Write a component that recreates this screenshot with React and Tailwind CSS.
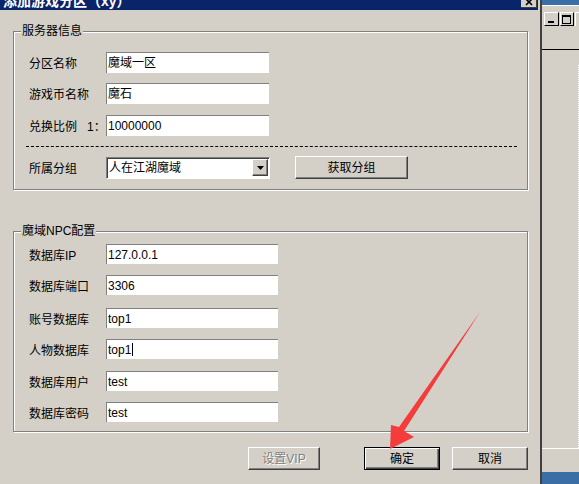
import React from "react";

const font = { fontFamily: '"Liberation Sans", "Noto Sans CJK SC", sans-serif' };

const GroupBox = ({ title, className, children }) => (
  <div
    className={`relative w-[515px] border border-[#808080] shadow-[inset_1px_1px_0_#fff,1px_1px_0_#fff] ${className}`}
  >
    <span className="absolute -top-[8px] left-[7px] bg-[#d4d0c8] px-[1px] text-[12px] leading-[14px] text-black">
      {title}
    </span>
    {children}
  </div>
);

const TextBox = ({ value, w, h = 20, caret }) => (
  <div
    className={`flex items-center bg-white border-t border-l border-[#808080] pl-[1px] text-[12px] leading-none text-black ${w} ${h === 21 ? "h-[21px]" : "h-[20px]"}`}
  >
    {value}
    {caret && <span className="ml-[1px] h-[13px] w-px bg-black" />}
  </div>
);

const Row = ({ label, children, className = "" }) => (
  <div className={`flex items-center pl-[15px] ${className}`}>
    <span className="flex w-[77px] pt-[3px] text-[12px] leading-none text-black">{label}</span>
    {children}
  </div>
);

const Btn = ({ children, w, primary, disabled }) => (
  <button
    className={`h-[23px] ${w} flex items-center justify-center text-[12px] bg-[#d4d0c8] ${
      primary
        ? "border border-black shadow-[inset_1px_1px_0_#fff,inset_-1px_-1px_0_#404040,inset_-2px_-2px_0_#808080]"
        : "border border-t-white border-l-white border-r-[#404040] border-b-[#404040] shadow-[inset_-1px_-1px_0_#808080]"
    } ${disabled ? "text-[#808080] [text-shadow:1px_1px_0_#fff]" : "text-black"}`}
  >
    {children}
  </button>
);

const npcRows = [
  { label: "数据库IP", value: "127.0.0.1", mt: "mt-0" },
  { label: "数据库端口", value: "3306", mt: "mt-[11px]" },
  { label: "账号数据库", value: "top1", mt: "mt-[13px]" },
  { label: "人物数据库", value: "top1", mt: "mt-[11px]", caret: true },
  { label: "数据库用户", value: "test", mt: "mt-[12px]" },
  { label: "数据库密码", value: "test", mt: "mt-[11px]" },
];

export default function App() {
  return (
    <div className="relative flex h-[484px] w-[579px] overflow-hidden bg-[#d4d0c8]" style={font}>
      {/* dialog */}
      <div className="flex w-[540px] flex-col">
        <div className="flex h-[10px] w-[538px] overflow-hidden bg-[#0a246a]">
          <span className="-mt-[7px] ml-[3px] text-[14px] font-bold leading-[16px] text-white">
            添加游戏分区（xy）
          </span>
          <div className="ml-auto mr-[1px] h-[8px] w-[16px] overflow-hidden border-r border-b border-r-[#404040] border-b-[#404040] bg-[#d4d0c8]">
            <svg width="16" height="8" viewBox="0 0 16 8">
              <path d="M4 -2 L8 2 L12 -2 M7 2 L9 2 M5 5 L8 2 L11 5" stroke="#000" strokeWidth="1.6" fill="none" />
            </svg>
          </div>
        </div>

        <div className="flex flex-col pl-[13px]">
          <GroupBox title="服务器信息" className="mt-[21px]">
            <div className="flex flex-col pt-[20px] pb-[10px]">
              <Row label="分区名称">
                <TextBox value="魔域一区" w="w-[163px]" h={21} />
              </Row>
              <Row label="游戏币名称" className="mt-[10px]">
                <TextBox value="魔石" w="w-[163px]" h={21} />
              </Row>
              <Row
                label={
                  <>
                    <span>兑换比例</span>
                    <span className="ml-[10px]">1：</span>
                  </>
                }
                className="mt-[11px]"
              >
                <TextBox value="10000000" w="w-[163px]" h={21} />
              </Row>
              <div className="ml-[12px] mr-[10px] mt-[10px] border-t border-dashed border-black" />
              <div className="mt-[9px] flex items-center">
                <Row label="所属分组">
                  <div className="flex h-[22px] w-[164px] items-center border border-t-[#808080] border-l-[#808080] border-r-white border-b-white bg-white shadow-[inset_1px_1px_0_#404040]">
                    <span className="pl-[2px] pt-[1px] text-[12px] leading-none text-black">人在江湖魔域</span>
                    <div className="ml-auto mr-[1px] flex h-[17px] w-[16px] items-center justify-center border border-t-white border-l-white border-r-[#404040] border-b-[#404040] bg-[#d4d0c8] shadow-[inset_-1px_-1px_0_#808080]">
                      <svg width="7" height="4" viewBox="0 0 7 4">
                        <path d="M0 0 H7 L3.5 4 Z" fill="#000" />
                      </svg>
                    </div>
                  </div>
                </Row>
                <div className="ml-[25px]">
                  <Btn w="w-[113px]">获取分组</Btn>
                </div>
              </div>
            </div>
          </GroupBox>

          <GroupBox title="魔域NPC配置" className="mt-[41px]">
            <div className="flex flex-col pt-[12px] pb-[9px]">
              {npcRows.map((r) => (
                <Row key={r.label} label={r.label} className={r.mt}>
                  <TextBox value={r.value} w="w-[172px]" caret={r.caret} />
                </Row>
              ))}
            </div>
          </GroupBox>

          <div className="mt-[15px] flex">
            <div className="ml-[235px]">
              <Btn w="w-[72px]" disabled>设置VIP</Btn>
            </div>
            <div className="ml-[44px]">
              <Btn w="w-[76px]" primary>确定</Btn>
            </div>
            <div className="ml-[12px]">
              <Btn w="w-[76px]">取消</Btn>
            </div>
          </div>
        </div>
      </div>

      {/* window edge */}
      <div className="w-[2px] bg-[#404040]" />

      {/* window behind */}
      <div className="flex w-[37px] flex-col">
        <div className="h-[5px] bg-[#3a6ea5]" />
        <div className="h-px bg-white" />
        <div className="h-[6px]" />
        <div className="flex h-[14px] gap-[1px] pl-[2px]">
          <div className="flex h-[14px] w-[16px] items-end justify-center border border-t-white border-l-white border-r-black border-b-black pb-[2px]">
            <div className="h-[2px] w-[6px] bg-black" />
          </div>
          <div className="flex h-[14px] w-[16px] items-center justify-center border border-t-white border-l-white border-r-black border-b-black">
            <div className="h-[9px] w-[9px] border border-t-2 border-black" />
          </div>
          <div className="h-[14px] w-[4px] border-l border-t border-white" />
        </div>
        <div className="h-[23px]" />
        <div className="h-px bg-black" />
        <div className="h-[15px]" />
        <div className="flex-1 border-r border-dotted border-white" />
        <div className="h-px bg-white" />
        <div className="h-[23px]" />
        <div className="h-[12px] bg-[#3a6ea5]" />
      </div>

      {/* red annotation arrow */}
      <svg className="pointer-events-none absolute left-0 top-0" width="579" height="484" viewBox="0 0 579 484">
        <polygon
          points="480,312 404,431 414,437 390,449 391,425 399,427"
          fill="#f53b3b"
        />
      </svg>
    </div>
  );
}
